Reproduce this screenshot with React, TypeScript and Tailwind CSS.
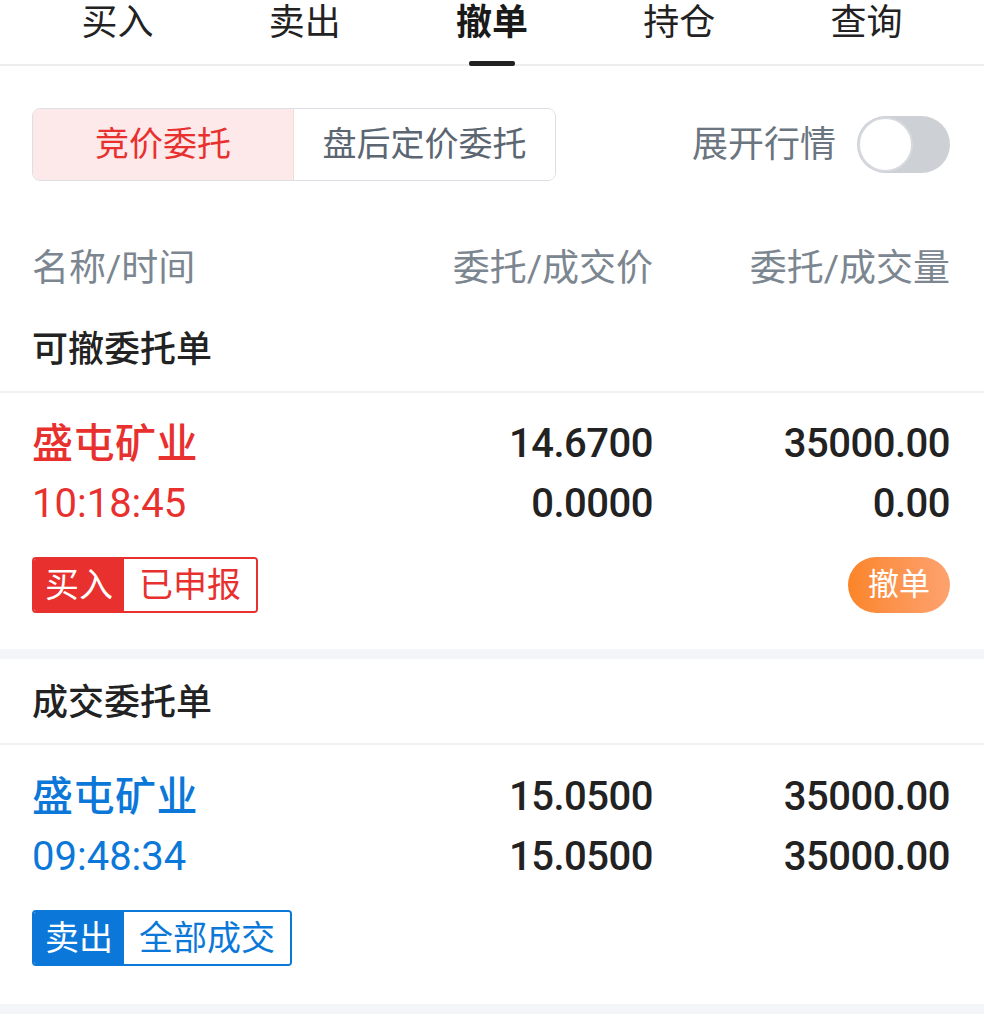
const tabs = ["买入", "卖出", "撤单", "持仓", "查询"]

const cjk = "font-['Roboto','Noto_Sans_CJK_SC',sans-serif]"

function OrderRow({
  name,
  time,
  price,
  filledPrice,
  qty,
  filledQty,
  side,
  status,
  color,
  cancel,
}: {
  name: string
  time: string
  price: string
  filledPrice: string
  qty: string
  filledQty: string
  side: string
  status: string
  color: "red" | "blue"
  cancel?: boolean
}) {
  const text = color === "red" ? "text-[#e8302f]" : "text-[#0b78d9]"
  const fill = color === "red" ? "bg-[#e8302f]" : "bg-[#0b78d9]"
  const border = color === "red" ? "border-[#e8302f]" : "border-[#0b78d9]"
  return (
    <div className={`pl-[32px] pr-[34px] ${cancel ? "pt-[25px] pb-[36px]" : "pt-[26px] pb-[38px]"}`}>
      <div className="flex">
        <div className="flex-1">
          <div className={`text-[41px] leading-[52px] font-medium tracking-[0.5px] ${text}`}>{name}</div>
          <div className={`mt-[8px] text-[40px] leading-[52px] ${text}`}>{time}</div>
        </div>
        <div className="w-[300px] text-right text-[40px] leading-[52px] font-medium tracking-[-0.5px] text-[#222]">
          <div>{price}</div>
          <div className="mt-[8px]">{filledPrice}</div>
        </div>
        <div className="w-[297px] text-right text-[40px] leading-[52px] font-medium tracking-[-0.5px] text-[#222]">
          <div>{qty}</div>
          <div className="mt-[8px]">{filledQty}</div>
        </div>
      </div>
      <div className="mt-[27px] flex items-center justify-between">
        <div className={`flex h-[56px] overflow-hidden rounded-[4px] border-2 ${border}`}>
          <div className={`flex items-center px-[11px] text-[34px] text-white ${fill}`}>{side}</div>
          <div className={`flex items-center bg-white px-[15px] text-[34px] ${text}`}>{status}</div>
        </div>
        {cancel && (
          <button className="flex h-[56px] w-[102px] items-center justify-center rounded-full bg-gradient-to-r from-[#fb8526] to-[#fda26e] text-[31px] text-white">
            撤单
          </button>
        )}
      </div>
    </div>
  )
}

export default function App() {
  return (
    <div className={`min-h-[1024px] w-[984px] bg-white ${cjk}`}>
      <div className="relative grid h-[66px] grid-cols-5 border-b-2 border-[#ededed] px-[24px]">
        {tabs.map((t) => (
          <div key={t} className="relative flex justify-center">
            <span
              className={`pt-[1px] text-[36px] leading-[44px] ${
                t === "撤单" ? "font-bold text-[#1a1a1a]" : "text-[#222]"
              }`}
            >
              {t}
            </span>
            {t === "撤单" && (
              <div className="absolute bottom-[-2px] left-1/2 h-[5px] w-[46px] -translate-x-1/2 rounded-[2px] bg-[#222]" />
            )}
          </div>
        ))}
      </div>

      <div className="flex items-center justify-between pl-[32px] pr-[34px] pt-[42px]">
        <div className="flex h-[73px] overflow-hidden rounded-[8px] border border-[#dcdfe3]">
          <div className="flex w-[261px] items-center justify-center border-r border-[#f5dadc] bg-[#fde9ea] text-[34px] text-[#e8302f]">
            竞价委托
          </div>
          <div className="flex w-[261px] items-center justify-center bg-white text-[34px] text-[#5b6672]">
            盘后定价委托
          </div>
        </div>
        <div className="flex items-center gap-[21px]">
          <span className="text-[36px] text-[#6b7580]">展开行情</span>
          <div className="flex h-[57px] w-[93px] items-center rounded-full bg-[#cdd0d5] p-[1px]">
            <div className="h-[55px] w-[55px] rounded-full border-2 border-[#d6d9dd] bg-white" />
          </div>
        </div>
      </div>

      <div className="mt-[66px] flex pl-[32px] pr-[34px] text-[37px] leading-[44px] text-[#7c8690]">
        <div className="flex-1">名称/时间</div>
        <div className="w-[300px] text-right">委托/成交价</div>
        <div className="w-[297px] text-right">委托/成交量</div>
      </div>

      <div className="border-b-2 border-[#f1f1f1] px-[32px] pt-[37px] pb-[19px] text-[36px] font-medium leading-[44px] text-[#222]">
        可撤委托单
      </div>
      <OrderRow
        name="盛屯矿业"
        time="10:18:45"
        price="14.6700"
        filledPrice="0.0000"
        qty="35000.00"
        filledQty="0.00"
        side="买入"
        status="已申报"
        color="red"
        cancel
      />
      <div className="h-[10px] bg-[#f4f5f9]" />

      <div className="border-b-2 border-[#f1f1f1] px-[32px] pt-[22px] pb-[18px] text-[36px] font-medium leading-[44px] text-[#222]">
        成交委托单
      </div>
      <OrderRow
        name="盛屯矿业"
        time="09:48:34"
        price="15.0500"
        filledPrice="15.0500"
        qty="35000.00"
        filledQty="35000.00"
        side="卖出"
        status="全部成交"
        color="blue"
      />
      <div className="h-[10px] bg-[#f4f5f9]" />
    </div>
  )
}
